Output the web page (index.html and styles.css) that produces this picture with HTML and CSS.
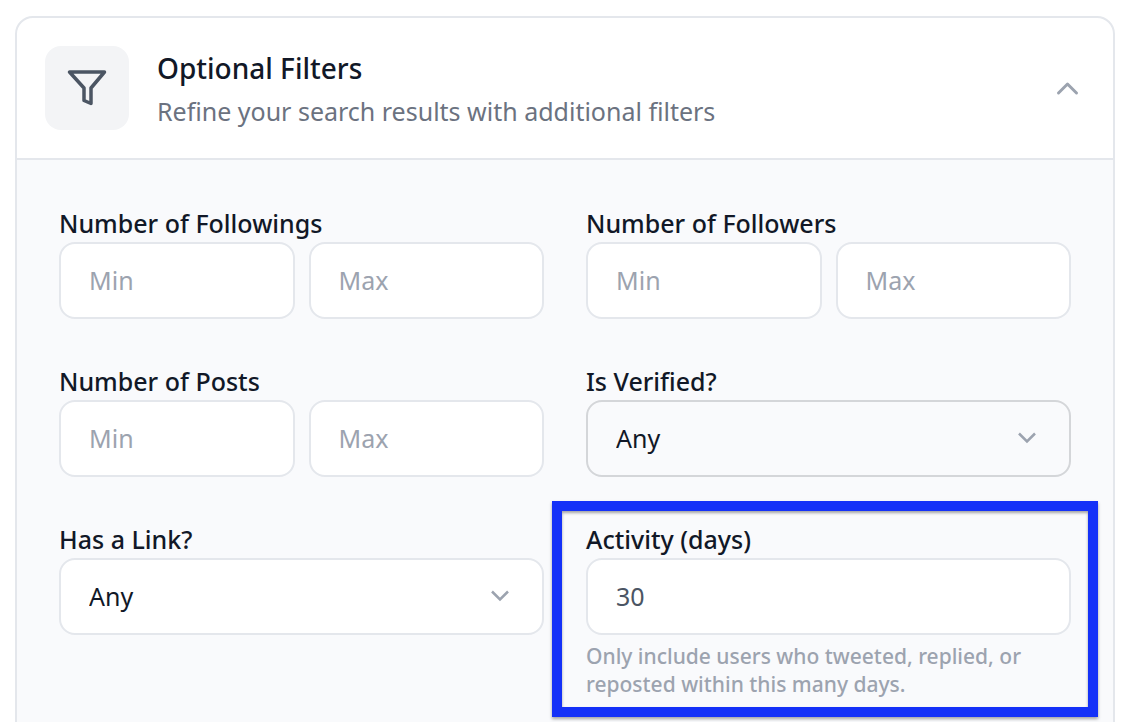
FILE: index.html
```html
<!DOCTYPE html>
<html lang="en">
<head>
<meta charset="utf-8">
<meta name="viewport" content="width=device-width, initial-scale=1">
<title>Optional Filters</title>
<link rel="stylesheet" href="styles.css">
</head>
<body>
<section class="card">
  <header class="card-header">
    <div class="tile">
      <svg class="tile-icon" viewBox="0 0 42 42" aria-hidden="true"><path d="M3.500 5H38.500L25 21V36.500L18 33.500V21Z"/></svg>
    </div>
    <div class="heading">
      <h2 class="title">Optional Filters</h2>
      <p class="subtitle">Refine your search results with additional filters</p>
    </div>
    <button class="toggle" type="button" aria-label="Collapse filters" aria-expanded="true">
      <svg class="toggle-icon" viewBox="0 0 24 24" aria-hidden="true"><path d="M3.500 17L12.500 8L21.500 17"/></svg>
    </button>
  </header>
  <form class="filters">
    <div class="field">
      <label class="label" for="followings-min">Number of Followings</label>
      <div class="range">
        <input class="control" id="followings-min" type="text" placeholder="Min">
        <input class="control" type="text" placeholder="Max" aria-label="Maximum followings">
      </div>
    </div>
    <div class="field">
      <label class="label" for="followers-min">Number of Followers</label>
      <div class="range">
        <input class="control" id="followers-min" type="text" placeholder="Min">
        <input class="control" type="text" placeholder="Max" aria-label="Maximum followers">
      </div>
    </div>
    <div class="field">
      <label class="label" for="posts-min">Number of Posts</label>
      <div class="range">
        <input class="control" id="posts-min" type="text" placeholder="Min">
        <input class="control" type="text" placeholder="Max" aria-label="Maximum posts">
      </div>
    </div>
    <div class="field">
      <label class="label" for="verified">Is Verified?</label>
      <div class="select">
        <select class="control control-select control-active" id="verified"><option>Any</option><option>Yes</option><option>No</option></select>
        <svg class="select-icon" viewBox="0 0 20 20" aria-hidden="true"><path d="M2 5.500L10 13.500L18 5.500"/></svg>
      </div>
    </div>
    <div class="field">
      <label class="label" for="link">Has a Link?</label>
      <div class="select">
        <select class="control control-select" id="link"><option>Any</option><option>Yes</option><option>No</option></select>
        <svg class="select-icon" viewBox="0 0 20 20" aria-hidden="true"><path d="M2 5.500L10 13.500L18 5.500"/></svg>
      </div>
    </div>
    <div class="field field-highlight">
      <label class="label" for="activity">Activity (days)</label>
      <input class="control" id="activity" type="text" inputmode="numeric" value="30" aria-describedby="activity-hint">
      <p class="hint" id="activity-hint">Only include users who tweeted, replied, or reposted within this many days.</p>
    </div>
  </form>
</section>
</body>
</html>
```
FILE: styles.css
```css
* {
  box-sizing: border-box;
}

body {
  margin: 0;
  padding: 16px 25px 0 15px;
  background: #fff;
  color: #111827;
  font-family: "Noto Sans", sans-serif;
  font-size: 25px;
}

.card {
  border: 2px solid #e4e7ec;
  border-radius: 18px;
  overflow: hidden;
}

.card-header {
  display: flex;
  align-items: center;
  gap: 28px;
  padding: 28px;
  border-bottom: 2px solid #e4e7ec;
}

.tile {
  display: flex;
  flex: none;
  align-items: center;
  justify-content: center;
  width: 84px;
  height: 84px;
  border-radius: 16px;
  background: #f3f4f6;
}

.tile-icon {
  width: 42px;
  height: 42px;
  fill: none;
  stroke: #4b5563;
  stroke-width: 3.500;
  stroke-linejoin: round;
}

.heading {
  flex: 1;
}

.title {
  margin: 0;
  font-size: 28px;
  font-weight: 500;
  line-height: 44px;
}

.subtitle {
  margin: 2px 0 0;
  color: #6b7280;
  line-height: 38px;
}

.toggle {
  display: flex;
  padding: 6px;
  border: 0;
  background: none;
}

.toggle-icon {
  width: 24px;
  height: 24px;
  fill: none;
  stroke: #9ca3af;
  stroke-width: 3;
  stroke-linecap: round;
  stroke-linejoin: round;
}

.filters {
  display: grid;
  grid-template-columns: repeat(2, minmax(0, 1fr));
  gap: 46px 42px;
  padding: 47px 42px;
  background: #f9fafc;
}

.field {
  position: relative;
}

.label {
  display: block;
  padding-bottom: 3px;
  font-weight: 500;
  line-height: 32px;
}

.range {
  display: grid;
  grid-template-columns: repeat(2, minmax(0, 1fr));
  gap: 14px;
}

.control {
  display: block;
  width: 100%;
  height: 77px;
  padding: 0 28px 2px;
  border: 2px solid #e4e7ec;
  border-radius: 16px;
  background: #fff;
  color: #4b5563;
  font: inherit;
}

.control::placeholder {
  color: #9ca3af;
  opacity: 1;
}

.control-select {
  appearance: none;
  color: #111827;
}

.control-active {
  border-color: #d4d6d9;
  background: #f9fafc;
}

.select {
  position: relative;
}

.select-icon {
  position: absolute;
  top: 28px;
  right: 34px;
  width: 20px;
  height: 20px;
  fill: none;
  stroke: #9ca3af;
  stroke-width: 2.500;
  pointer-events: none;
}

.hint {
  margin: 7px 0 0;
  color: #9ca3af;
  font-size: 21px;
  font-weight: 500;
  line-height: 28px;
}

.field-highlight::after {
  content: "";
  position: absolute;
  inset: -22px -27px -19px -34px;
  border: 10px solid #1431f8;
  box-shadow: 0 2px 3px rgba(0, 0, 0, 0.35), inset 0 2px 3px rgba(0, 0, 0, 0.35);
  pointer-events: none;
}
```
